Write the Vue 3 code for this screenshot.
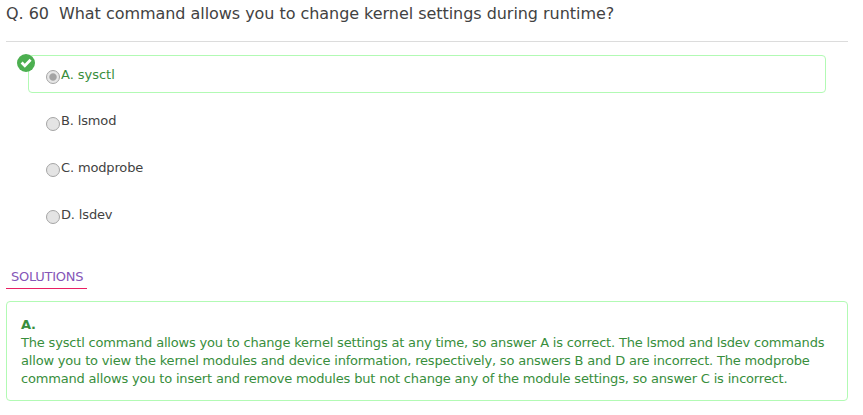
<script setup>
const question = { number: 60, text: 'What command allows you to change kernel settings during runtime?' }
const options = [
  { letter: 'A', label: 'sysctl', correct: true },
  { letter: 'B', label: 'lsmod' },
  { letter: 'C', label: 'modprobe' },
  { letter: 'D', label: 'lsdev' },
]
</script>

<template>
  <main class="quiz">
    <h1 class="question">Q. {{ question.number }}&nbsp; {{ question.text }}</h1>
    <ul class="options">
      <li v-for="o in options" :key="o.letter" class="option" :class="{ correct: o.correct }">
        <svg v-if="o.correct" class="badge" viewBox="0 0 18 18">
          <circle cx="9" cy="9" r="9" />
          <path d="M4.6 8.6 L7.8 11.7 L13.6 5.8" />
        </svg>
        <span class="radio" :class="{ checked: o.correct }"></span>
        <span class="label">{{ o.letter }}. {{ o.label }}</span>
      </li>
    </ul>
    <div class="tab">SOLUTIONS</div>
    <section class="solution">
      <strong>A.</strong>
      <p>The sysctl command allows you to change kernel settings at any time, so answer A is correct. The lsmod and lsdev commands allow you to view the kernel modules and device information, respectively, so answers B and D are incorrect. The modprobe command allows you to insert and remove modules but not change any of the module settings, so answer C is incorrect.</p>
    </section>
  </main>
</template>

<style>
body {
  background: #fff;
}
</style>

<style scoped>
.quiz {
  box-sizing: border-box;
  width: 863px;
  height: 415px;
  padding: 0 15px 0 6px;
  overflow: hidden;
  font-family: "DejaVu Sans", sans-serif;
  font-size: 13px;
  color: #424242;
}
.question {
  box-sizing: border-box;
  height: 42px;
  margin: 0;
  padding-top: 4px;
  border-bottom: 1px solid #dcdcdc;
  font-size: 16px;
  font-weight: 400;
  line-height: 19px;
  letter-spacing: -0.045px;
  white-space: nowrap;
}
.options {
  display: flex;
  flex-direction: column;
  gap: 8.67px;
  margin: 0;
  padding: 13px 22px 0;
  list-style: none;
}
.option {
  position: relative;
  box-sizing: border-box;
  display: flex;
  height: 38px;
  padding: 0 17px;
  border: 1px solid transparent;
  border-radius: 4px;
}
.option.correct {
  border-color: #b2fab4;
  color: #388e3c;
}
.badge {
  position: absolute;
  left: -12px;
  top: -2.5px;
  width: 18px;
  height: 18px;
}
.badge circle {
  fill: #4caf50;
}
.badge path {
  fill: none;
  stroke: #fff;
  stroke-width: 2.8;
}
.radio {
  box-sizing: border-box;
  width: 14px;
  height: 14px;
  margin-top: 14px;
  border: 1px solid #a5a5a5;
  border-radius: 50%;
  background: #e4e4e4;
}
.radio.checked {
  background: radial-gradient(circle, #a4a4a4 0 3.2px, #e6e6e6 4.2px);
}
.label {
  margin: 10.8px 0 0 1px;
  line-height: 16px;
  letter-spacing: -0.15px;
}
.option.correct .label {
  letter-spacing: -0.03px;
}
.tab {
  box-sizing: border-box;
  width: 81px;
  height: 24px;
  margin-top: 32px;
  padding-left: 5px;
  border-bottom: 1px solid #e91e63;
  line-height: 23px;
  letter-spacing: -0.27px;
  color: #8556b8;
}
.solution {
  box-sizing: border-box;
  height: 100px;
  margin-top: 12px;
  padding: 14px;
  border: 1px solid #b2fab4;
  border-radius: 4px;
  line-height: 18px;
  letter-spacing: -0.18px;
  color: #388e3c;
}
.solution strong {
  display: block;
}
.solution p {
  margin: 0;
}
</style>
